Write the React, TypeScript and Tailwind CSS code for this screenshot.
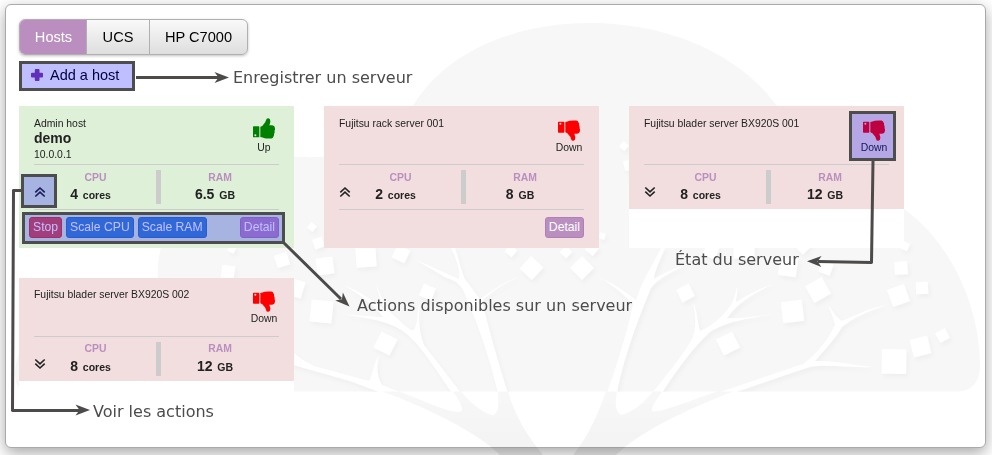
import React from "react";

const SANS = "font-['Liberation_Sans',Arial,sans-serif]";

// centre x, centre y, side, rotation
const leaves: [number, number, number, number][] = [
  [325, 266, 17, -8], [366, 257, 20, -4], [401, 254, 14, 26], [321.5, 311.5, 22, 6],
  [385.5, 343.5, 18, 27], [427.5, 292, 13, 22], [531.5, 268, 17, 43], [582, 268, 17, 45],
  [566, 252, 9, 43], [511, 251, 9, 40], [592, 249, 10, 40], [312, 227, 7, 40],
  [318.5, 243, 10, -20], [602, 236, 6, 15], [282, 260, 13, -17], [228, 272, 13, 8],
  [232, 249, 7, 30], [295, 288, 17, 17], [685.5, 293, 14, -27], [728, 343.5, 18, -27],
  [792.5, 311.5, 21, -7], [818, 290, 19, -30], [826, 268, 12, 20], [788, 267, 18, 8],
  [898.5, 295.5, 18, -20], [922, 288, 12, -3], [901, 268, 13, -5], [894, 361.5, 24.5, 1],
  [920.5, 346.5, 18, -14], [942.5, 335.5, 11, -28], [905, 246, 8, 25], [624, 146, 7, 40],
  [629, 165, 10, -15], [711, 251, 13, 22], [744, 248, 21, 0], [803, 246, 12, 45],
];

function Tree() {
  return (
    <svg className="pointer-events-none absolute -left-[6px] -top-[5px]" width="992" height="455" viewBox="0 0 992 455">
      <defs>
        <filter id="soft" x="-5%" y="-5%" width="110%" height="110%">
          <feDropShadow dx="2" dy="3" stdDeviation="2" floodColor="#000" floodOpacity="0.03" />
        </filter>
        <linearGradient id="trunkShade" x1="0" y1="0" x2="0" y2="1">
          <stop offset="0" stopOpacity="0.03" />
          <stop offset="0.86" stopOpacity="0.045" />
          <stop offset="1" stopOpacity="0.08" />
        </linearGradient>
        <clipPath id="crown">
          <rect x="0" y="0" width="992" height="391.5" />
        </clipPath>
      </defs>
      <path
        fill="#f7f7f7"
        d="M413 106C443 55 510 23 590 23C671 23 741 56 777 106C790 128 803 158 808 184C850 180 880 191 904 209C950 242 980 305 980 366C980 383 970 391.5 958 391.5H26C18 391 15 382 15 373C16 353 26 335 42 323C80 298 120 290 158 282C153 205 220 153 310 157H384C391 140 401 124 413 106Z"
      />
      <g fill="#fff" filter="url(#soft)" clipPath="url(#crown)">
        {leaves.map(([x, y, s, a]) => (
          <rect key={`${x}-${y}`} x={x - s / 2} y={y - s / 2} width={s} height={s} transform={`rotate(${a} ${x} ${y})`} />
        ))}
        <path d="M382 393L350 381L290 364V350L303 360L314 366L369 381C373 375 373 364 379 355C376 368 377 377 382 385L402 393Z" />
        <path d="M452 393C438 372 421 347 411 338C399 325 381 319 340 314C357 315 374 317 383 317C373 304 355 290 340 284C359 290 375 302 387 312C381 302 378 293 376 283C381 299 388 312 398 319C406 327 411 331 414 330C418 323 417 311 420 302C418 318 419 332 424 345L461 393Z" />
        <path d="M498 393C490 359 478 324 467 300C463 286 457 281 447 278C437 273 425 264 414 260C431 265 448 275 459 279C461 269 456 259 451 248H455C460 263 462 275 466 281C472 287 476 295 480 299C491 292 504 281 521 276C506 282 492 291 482 301C489 330 499 366 508 393Z" />
        <path d="M607 393C619 359 629 325 633 304C622 293 610 282 595 276C612 282 626 292 636 300C643 278 654 263 661 248H665C659 262 654 273 654 279C664 273 674 268 687 264C674 271 657 279 651 288C640 314 623 359 617 393Z" />
        <path d="M652 393C668 374 688 348 693 337C697 325 695 314 693 303C698 312 697 322 700 331C710 327 720 319 728 309C734 302 735 295 737 286C738 292 736 297 736 302C748 295 760 288 774 284C758 291 740 300 727 318C742 319 756 316 773 314C755 318 728 320 710 332C692 348 672 377 662 393Z" />
        <path d="M717 393L803 364C815 356 829 339 835 325C833 316 831 313 828 305C834 313 837 318 842 321C854 316 869 308 887 305C868 311 851 319 842 327C835 340 822 352 815 361C836 360 855 366 876 367C850 368 830 364 810 367C785 375 758 385 733 393Z" />
      </g>
      <path
        fill="url(#trunkShade)"
        d="M382 391.5L399 391.5C423 400 442 410 457 412C466 413 462 404 453 391.5H461C472 405 486 415 494 415C500 411 498 401 498 391.5H508C515 416 528 437 543 455H573C588 437 598 414 606 391.5H617C615 402 615 412 621 415C632 413 645 402 653 391.5H662C657 399 651 406 652 411C657 414 687 402 717 391.5H733C696 406 644 428 616 455H500C481 435 427 407 382 391.5Z"
      />
    </svg>
  );
}

function Thumb({ up }: { up: boolean }) {
  return (
    <svg
      className={up ? "-scale-y-100 text-[#008000]" : "text-[#ff0000]"}
      width="22"
      height="21"
      viewBox="0 0 66 63"
      fill="currentColor"
    >
      <path
        fillRule="evenodd"
        d="M2 5H17Q19 5 19 7V36Q19 38 17 38H2Q0 38 0 36V7Q0 5 2 5ZM7 8.500A3 3 0 1 0 7 14.500A3 3 0 1 0 7 8.500Z"
      />
      <path d="M22 6Q29 5 35 2.500Q41 .5 55 1.500Q60 2 61 7Q64 10 63 15Q66 19 64.500 24Q67 29 65.500 34Q65 41 56 41.500L49 41Q51 47 52 52Q52.500 62 46 62.500Q40 63 39 56Q37 49 33 46Q29 38 22 37Z" />
    </svg>
  );
}

function Chevrons({ up }: { up: boolean }) {
  return (
    <svg className={up ? "mt-[5px]" : "mt-1 rotate-180"} width="12" height="12" viewBox="0 0 12 12" fill="none" stroke="#222" strokeWidth="1.6">
      <path d="M1.300 6.300L6 2L10.700 6.300M1.300 10.500L6 6.200L10.700 10.500" />
    </svg>
  );
}

type Action = { label: string; tone: "danger" | "primary" | "detail" };

const tones = {
  danger: "bg-[#d9534f] border-[#d43f3a]",
  primary: "bg-[#428bca] border-[#357ebd]",
  detail: "bg-[#ba8fbf] border-[#ae80b5] ml-auto",
};

type Host = {
  title: string;
  name?: string;
  ip?: string;
  up?: boolean;
  open?: boolean;
  tight?: boolean;
  cores: string;
  ram: string;
  actions?: Action[];
};

const detail: Action = { label: "Detail", tone: "detail" };

const hosts: Host[] = [
  {
    title: "Admin host", name: "demo", ip: "10.0.0.1", up: true, open: true, cores: "4", ram: "6.5",
    actions: [
      { label: "Stop", tone: "danger" },
      { label: "Scale CPU", tone: "primary" },
      { label: "Scale RAM", tone: "primary" },
      detail,
    ],
  },
  { title: "Fujitsu rack server 001", open: true, cores: "2", ram: "8", actions: [detail] },
  { title: "Fujitsu blader server BX920S 001", cores: "8", ram: "12" },
  { title: "Fujitsu blader server BX920S 002", cores: "8", ram: "12", tight: true },
];

function Metric({ label, value, unit, tight }: { label: string; value: string; unit: string; tight?: boolean }) {
  return (
    <div className="flex-1 text-center font-bold">
      <div className={`text-[10.4px] text-[#ba8fbf] ${tight ? "mb-px leading-[12px]" : "pt-px leading-[12px]"}`}>{label}</div>
      <div className="pr-[10px] text-[14px] leading-5">
        {value} <span className="ml-px text-[10.5px]">{unit}</span>
      </div>
    </div>
  );
}

function HostCard({ host }: { host: Host }) {
  return (
    <div className="h-[142px] w-[275px] bg-white">
      <div className={`px-[15px] ${host.open ? "h-[142px]" : "h-[103px]"} ${host.up ? "bg-[#dff0d8]" : "bg-[#f2dede]"}`}>
        <div className={`flex h-[58px] justify-between ${host.tight ? "pt-[9px]" : "pt-[10px]"}`}>
          <div className="text-[10.4px] leading-[15px]">
            <div>{host.title}</div>
            {host.name && <div className="text-[14px] font-bold leading-[15px]">{host.name}</div>}
            {host.ip && <div className="leading-[18px]">{host.ip}</div>}
          </div>
          <div className={`-mr-px flex w-8 flex-col items-center text-[10.4px] ${host.up ? "pt-[2px]" : "pt-[4px]"}`}>
            <Thumb up={!!host.up} />
            <div className={host.up ? "mt-[2px] leading-[14px]" : "leading-[14px]"}>{host.up ? "Up" : "Down"}</div>
          </div>
        </div>
        <div className="flex h-[45px] border-t border-[#ccc] pt-[5px]">
          <div className="flex w-3 items-center">
            <Chevrons up={!!host.open} />
          </div>
          <div className="mr-[11px] flex w-[99px] pt-[1px]">
            <Metric label="CPU" value={host.cores} unit="cores" tight={host.tight} />
          </div>
          <div className="h-[34px] w-[5px] bg-[#ccc]" />
          <div className="flex w-[118px] pt-[1px]">
            <Metric label="RAM" value={host.ram} unit="GB" tight={host.tight} />
          </div>
        </div>
        {host.actions && (
          <div className="relative -ml-[5px] flex gap-1 pt-2 before:absolute before:left-[5px] before:right-0 before:top-0 before:h-px before:bg-[#ccc] before:content-['']">
            {host.actions.map((a) => (
              <button key={a.label} className={`h-[21px] rounded-[3px] border px-[3px] text-[12.2px] leading-[19px] text-white ${tones[a.tone]}`}>
                {a.label}
              </button>
            ))}
          </div>
        )}
      </div>
    </div>
  );
}

const NOTE = "absolute whitespace-nowrap font-['DejaVu_Sans',sans-serif] text-[16px] leading-5 text-[#4d4b4b]";
const MARK = "absolute border-[3px] border-[#4d4d4d] bg-[rgba(0,0,255,0.25)]";

// Explanatory marks laid over the interface
function Annotations() {
  const head = "M0 0L-14.5 -5.5L-10.5 0L-14.5 5.5Z";
  return (
    <>
      <div className={`${MARK} left-[19px] top-[61px] h-[30px] w-[116px]`} />
      <div className={`${MARK} left-[21px] top-[174px] h-[34px] w-[36px]`} />
      <div className={`${MARK} left-[22px] top-[212px] h-[32px] w-[263px]`} />
      <div className={`${MARK} left-[849px] top-[111px] h-[50px] w-[47px]`} />
      <svg className="absolute left-0 top-0" width="992" height="455" viewBox="0 0 992 455" fill="none" stroke="#4d4b4a" strokeWidth="3">
        <path d="M136 77.5H220M284 243L341 299M22 190.500H13.500L12.500 410.500H80M873 161L871.500 262.500L818 261.500" strokeLinejoin="round" />
        <g fill="#4d4b4a" stroke="none">
          <path d={head} transform="translate(229 77.500)" />
          <path d={head} transform="translate(349.500 306.500) rotate(44)" />
          <path d={head} transform="translate(90 410)" />
          <path d={head} transform="translate(807 261.300) rotate(181)" />
        </g>
      </svg>
      <div className={`${NOTE} left-[233px] top-[68px]`}>Enregistrer un serveur</div>
      <div className={`${NOTE} left-[357px] top-[296px]`}>Actions disponibles sur un serveur</div>
      <div className={`${NOTE} left-[675px] top-[250px]`}>État du serveur</div>
      <div className={`${NOTE} left-[93px] top-[402px]`}>Voir les actions</div>
    </>
  );
}

export default function App() {
  return (
    <div className={`relative h-[455px] w-[992px] overflow-hidden bg-white pl-[5px] pt-1 text-[#222] ${SANS}`}>
      <div className="relative h-[444px] w-[981px] rounded-md border border-[#aaa] bg-white shadow-[0_5px_15px_rgba(0,0,0,0.35)]">
        <Tree />
        <div className="relative pl-[13px] pt-[14px]">
          <div className="flex h-9 w-[229px] overflow-hidden rounded-md border border-[#b0b0b0] bg-linear-to-b from-[#f9f9f9] to-[#dedede] text-[14.6px] leading-[34px] text-black shadow-[0_1px_3px_rgba(0,0,0,0.25)]">
            <div className="w-[66px] bg-[#ba8fbf] pl-px text-center text-white">Hosts</div>
            <div className="w-[63px] border-l border-[#b0b0b0] text-center">UCS</div>
            <div className="flex-1 border-l border-[#b0b0b0] text-center">HP C7000</div>
          </div>
          <div className="mt-[6px] flex h-[30px] items-center pl-3 text-[14.5px] text-black">
            <svg className="-mt-[2px] mr-[7px]" width="12" height="12" viewBox="0 0 12 12" fill="#8040a0">
              <rect x="3.800" width="4.700" height="12" rx="1" />
              <rect y="3.700" width="12" height="4.700" rx="1" />
            </svg>
            <span className="-mt-px">Add a host</span>
          </div>
          <div className="mt-[15px] flex w-[900px] flex-wrap gap-[30px]">
            {hosts.map((h) => (
              <HostCard key={h.title} host={h} />
            ))}
          </div>
        </div>
      </div>
      <Annotations />
    </div>
  );
}
